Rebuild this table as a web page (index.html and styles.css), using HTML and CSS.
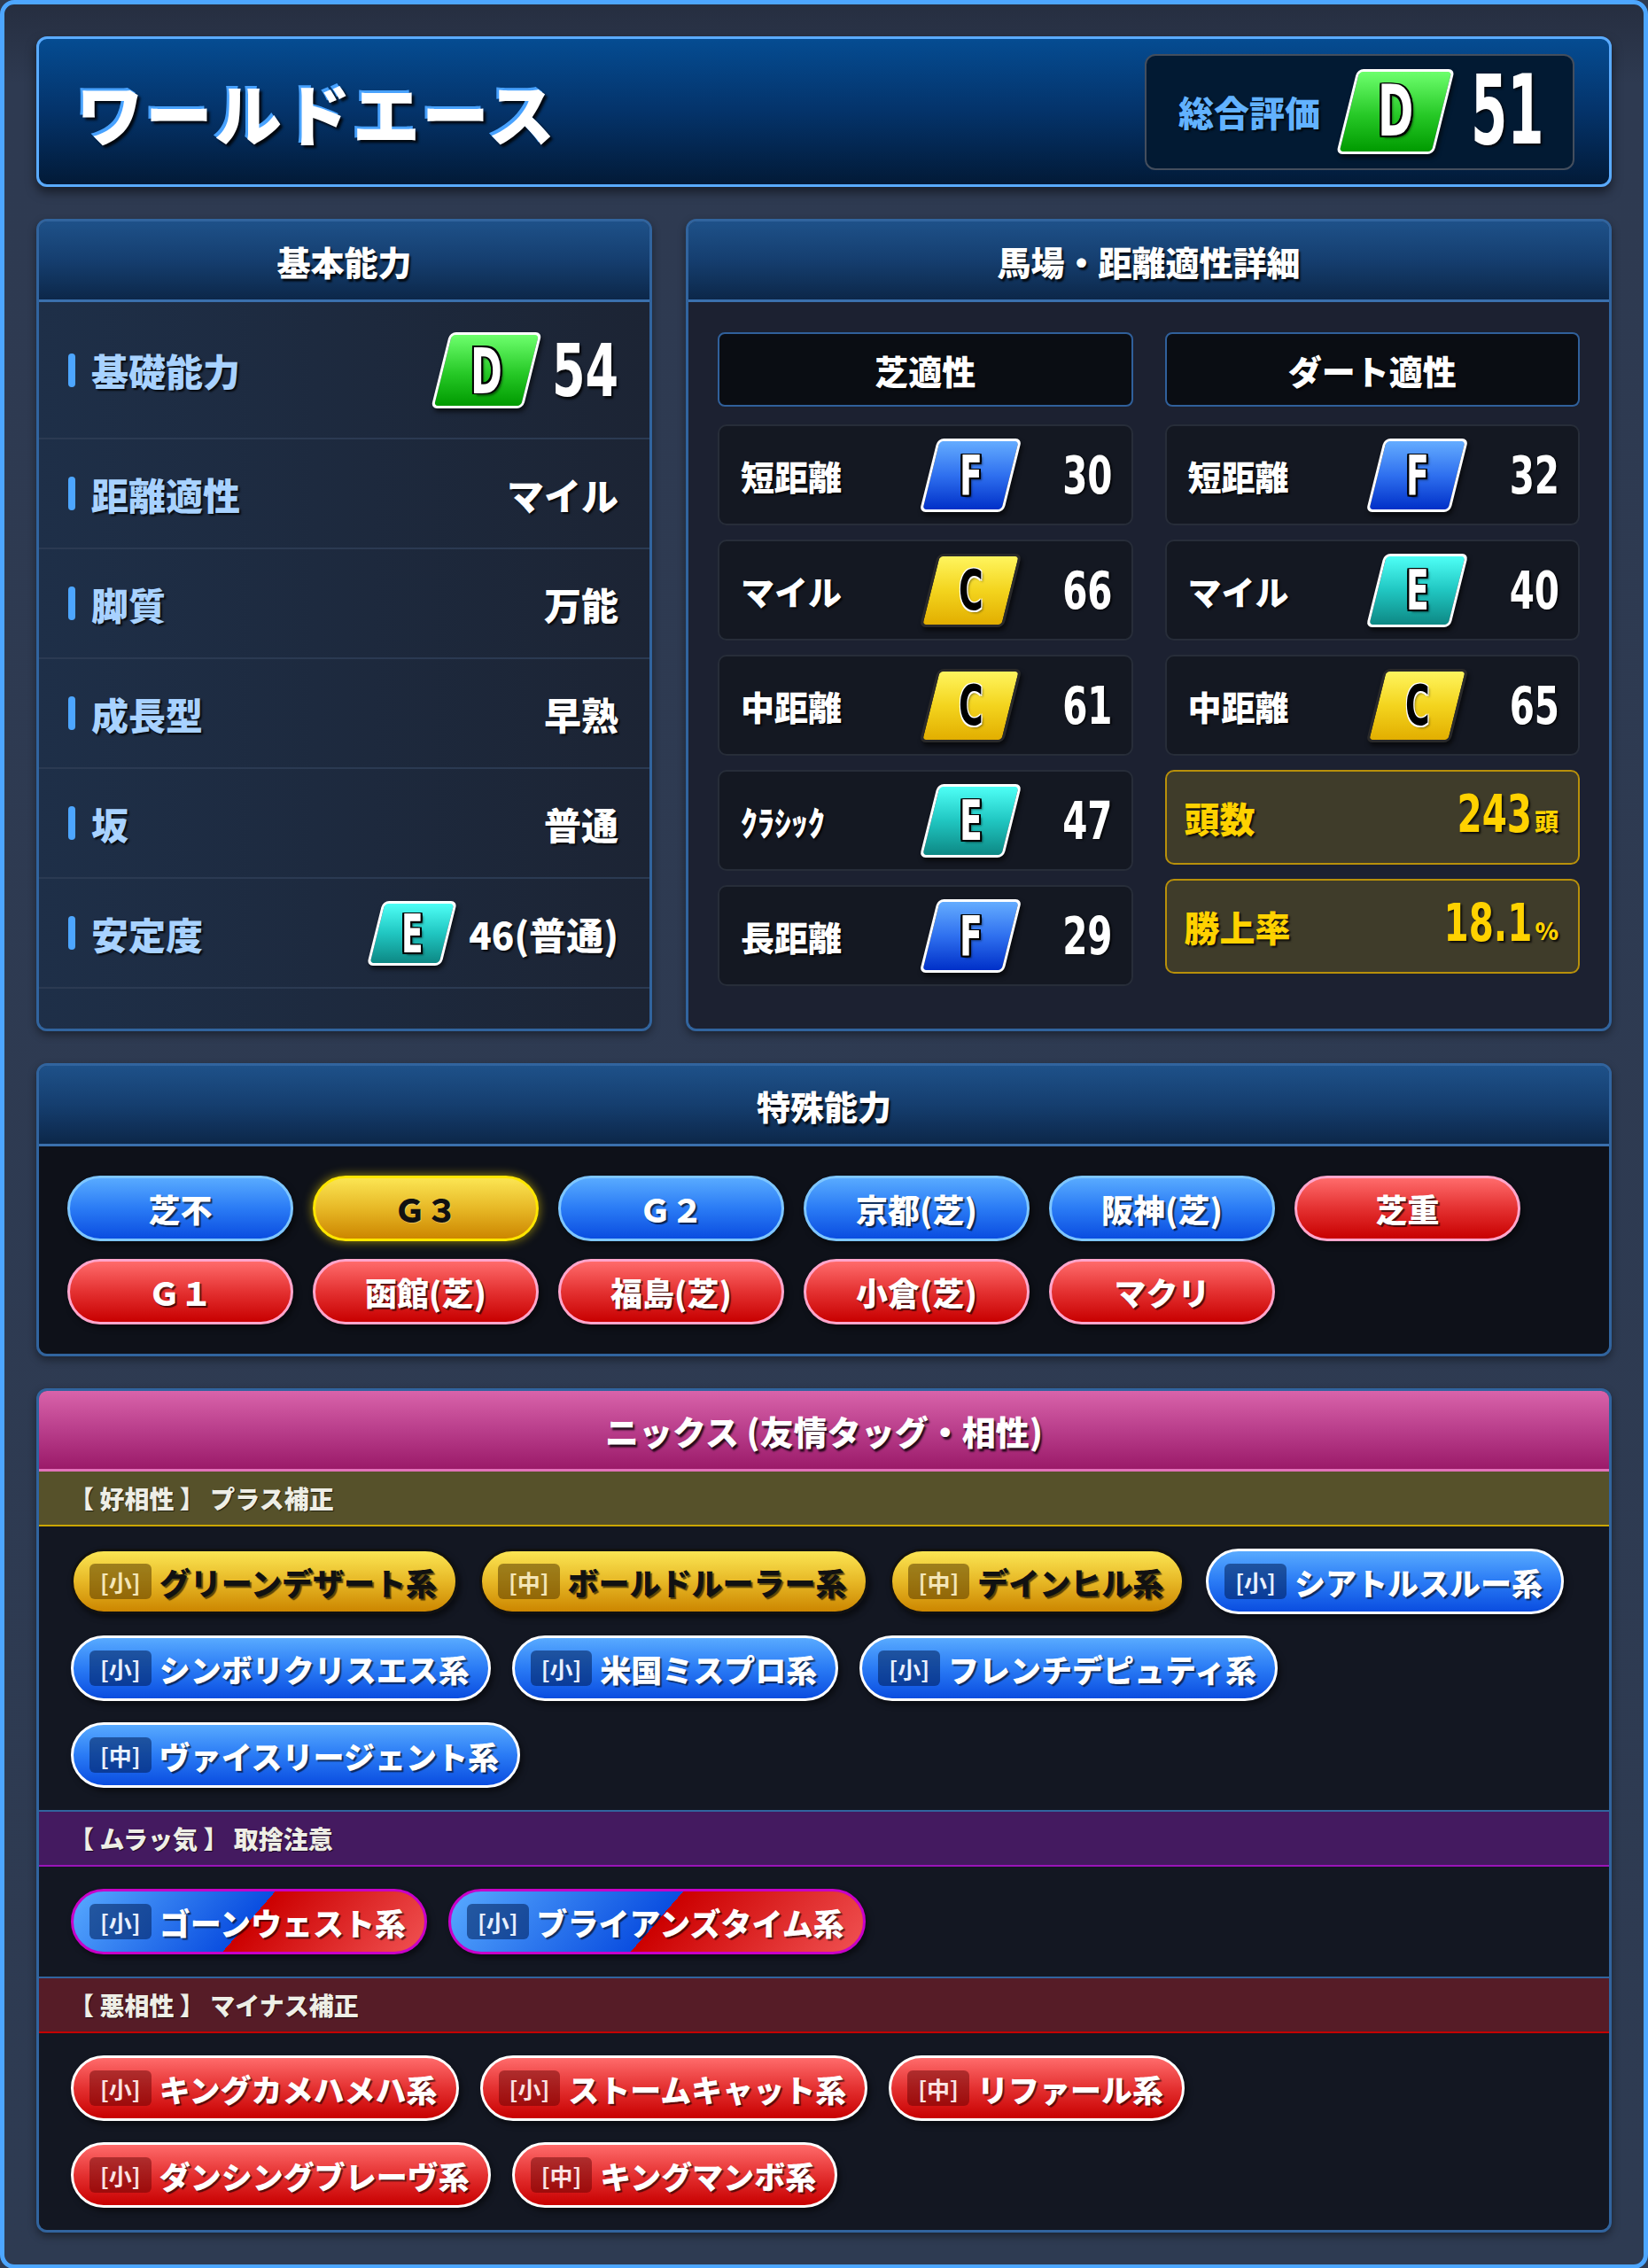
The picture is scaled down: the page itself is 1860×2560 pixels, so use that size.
FILE: index.html
```html
<!DOCTYPE html>
<html lang="ja">
<head>
<meta charset="utf-8">
<title>ワールドエース</title>
<link rel="stylesheet" href="styles.css">
</head>
<body>
<div class="frame">
  <header class="top">
    <h1 class="name">ワールドエース</h1>
    <div class="score">
      <span class="score-label">総合評価</span>
      <span class="grade g-d sz-xl"><span>D</span></span>
      <span class="score-num">51</span>
    </div>
  </header>

  <div class="row2">
    <section class="panel">
      <div class="panel-head">基本能力</div>
      <div class="basic-body">
        <div class="brow first">
          <span class="blabel">基礎能力</span>
          <span class="bval"><span class="grade g-d sz-l"><span>D</span></span><span class="bignum">54</span></span>
        </div>
        <div class="brow"><span class="blabel">距離適性</span><span class="bval">マイル</span></div>
        <div class="brow"><span class="blabel">脚質</span><span class="bval">万能</span></div>
        <div class="brow"><span class="blabel">成長型</span><span class="bval">早熟</span></div>
        <div class="brow"><span class="blabel">坂</span><span class="bval">普通</span></div>
        <div class="brow">
          <span class="blabel">安定度</span>
          <span class="bval"><span class="grade g-e sz-s"><span>E</span></span><span>46(普通)</span></span>
        </div>
      </div>
    </section>

    <section class="panel">
      <div class="panel-head">馬場・距離適性詳細</div>
      <div class="fit-body">
        <div class="col">
          <div class="subhead">芝適性</div>
          <div class="frow"><span class="flabel">短距離</span><span class="grade g-f sz-m"><span>F</span></span><span class="fnum">30</span></div>
          <div class="frow"><span class="flabel">マイル</span><span class="grade g-c sz-m"><span>C</span></span><span class="fnum">66</span></div>
          <div class="frow"><span class="flabel">中距離</span><span class="grade g-c sz-m"><span>C</span></span><span class="fnum">61</span></div>
          <div class="frow"><span class="flabel">ｸﾗｼｯｸ</span><span class="grade g-e sz-m"><span>E</span></span><span class="fnum">47</span></div>
          <div class="frow"><span class="flabel">長距離</span><span class="grade g-f sz-m"><span>F</span></span><span class="fnum">29</span></div>
        </div>
        <div class="col">
          <div class="subhead">ダート適性</div>
          <div class="frow"><span class="flabel">短距離</span><span class="grade g-f sz-m"><span>F</span></span><span class="fnum">32</span></div>
          <div class="frow"><span class="flabel">マイル</span><span class="grade g-e sz-m"><span>E</span></span><span class="fnum">40</span></div>
          <div class="frow"><span class="flabel">中距離</span><span class="grade g-c sz-m"><span>C</span></span><span class="fnum">65</span></div>
          <div class="stat"><span class="stat-label">頭数</span><span class="stat-val"><span class="stat-num">243</span><span class="stat-unit">頭</span></span></div>
          <div class="stat"><span class="stat-label">勝上率</span><span class="stat-val"><span class="stat-num">18.1</span><span class="stat-unit">%</span></span></div>
        </div>
      </div>
    </section>
  </div>

  <section class="panel">
    <div class="panel-head">特殊能力</div>
    <div class="sp-body">
      <span class="pill blue">芝不</span>
      <span class="pill gold">Ｇ３</span>
      <span class="pill blue">Ｇ２</span>
      <span class="pill blue">京都(芝)</span>
      <span class="pill blue">阪神(芝)</span>
      <span class="pill red">芝重</span>
      <span class="pill red">Ｇ１</span>
      <span class="pill red">函館(芝)</span>
      <span class="pill red">福島(芝)</span>
      <span class="pill red">小倉(芝)</span>
      <span class="pill red">マクリ</span>
    </div>
  </section>

  <section class="panel nicks">
    <div class="panel-head">ニックス (友情タッグ・相性)</div>
    <div class="sec-head good">【 好相性 】 プラス補正</div>
    <div class="sec-body">
      <span class="nick gold"><span class="tag">[小]</span>グリーンデザート系</span>
      <span class="nick gold"><span class="tag">[中]</span>ボールドルーラー系</span>
      <span class="nick gold"><span class="tag">[中]</span>デインヒル系</span>
      <span class="nick blue"><span class="tag">[小]</span>シアトルスルー系</span>
      <span class="nick blue"><span class="tag">[小]</span>シンボリクリスエス系</span>
      <span class="nick blue"><span class="tag">[小]</span>米国ミスプロ系</span>
      <span class="nick blue"><span class="tag">[小]</span>フレンチデピュティ系</span>
      <span class="nick blue"><span class="tag">[中]</span>ヴァイスリージェント系</span>
    </div>
    <div class="sec-head mura">【 ムラッ気 】 取捨注意</div>
    <div class="sec-body">
      <span class="nick mix"><span class="tag">[小]</span>ゴーンウェスト系</span>
      <span class="nick mix"><span class="tag">[小]</span>ブライアンズタイム系</span>
    </div>
    <div class="sec-head bad">【 悪相性 】 マイナス補正</div>
    <div class="sec-body">
      <span class="nick red"><span class="tag">[小]</span>キングカメハメハ系</span>
      <span class="nick red"><span class="tag">[小]</span>ストームキャット系</span>
      <span class="nick red"><span class="tag">[中]</span>リファール系</span>
      <span class="nick red"><span class="tag">[小]</span>ダンシングブレーヴ系</span>
      <span class="nick red"><span class="tag">[中]</span>キングマンボ系</span>
    </div>
  </section>
</div>
</body>
</html>
```

FILE: styles.css
```css
* { box-sizing: border-box; margin: 0; padding: 0; }
html, body { background: #2e3b52; }
body {
  margin: 0;
  font-family: "Noto Sans CJK JP", "Noto Sans", sans-serif;
  font-weight: 900;
  color: #fff;
}

.frame {
  width: 1860px;
  min-height: 2560px;
  border: 5px solid #4da6ff;
  border-radius: 16px;
  background: linear-gradient(#262e40, #2e3a51 90px, #2e3b52);
  padding: 36px;
  display: flex;
  flex-direction: column;
  gap: 36px;
}

/* ---------- header ---------- */
.top {
  height: 170px;
  flex: none;
  border: 3px solid #5aabff;
  border-radius: 12px;
  background: linear-gradient(#054c92, #04336a 50%, #021a37);
  display: flex;
  align-items: center;
  justify-content: space-between;
  padding: 0 39px 0 42px;
  box-shadow: 0 6px 12px rgba(0, 0, 0, .5);
}
.name {
  font-size: 76px;
  font-weight: 900;
  letter-spacing: 2px;
  line-height: 1;
  color: #fff;
  text-shadow: -3px -3px 0 #48a2ff, 3px 3px 3px rgba(0, 0, 0, .85);
}
.score {
  width: 485px;
  height: 131px;
  border: 2px solid #444e5d;
  border-radius: 12px;
  background: #021a33;
  display: flex;
  align-items: center;
  padding: 0 20px 0 36px;
  gap: 30px;
}
.score-label {
  font-size: 40px;
  white-space: nowrap;
  flex: none;
  color: #62b2ff;
  text-shadow: 2px 2px 2px rgba(0, 0, 0, .8);
}
.score-num, .bignum, .fnum, .stat-num {
  font-family: "DejaVu Sans Condensed", "Liberation Sans Narrow", "Liberation Sans", sans-serif;
  font-weight: 700;
  line-height: 1;
  display: inline-block;
  white-space: nowrap;
}
.score-num {
  font-size: 66px;
  transform: scaleY(1.65);
  text-shadow: 2px 1px 2px rgba(0, 0, 0, .8);
}

/* ---------- grade badges ---------- */
.grade {
  display: inline-flex;
  align-items: center;
  justify-content: center;
  flex: none;
  transform: skewX(-14deg);
  border: 3px solid #fff;
  border-radius: 7px;
  box-shadow: 3px 4px 5px rgba(0, 0, 0, .6);
}
.grade > span {
  display: block;
  transform: skewX(14deg) scaleY(1.5);
  font-family: "DejaVu Sans Condensed", "Liberation Sans Narrow", "Liberation Sans", sans-serif;
  font-weight: 700;
  line-height: 1;
  color: #fff;
  text-shadow: -2px -1px 0 #000, 2px -1px 0 #000, -2px 1px 0 #000, 2px 1px 0 #000,
               0 -1px 0 #000, 0 1px 0 #000, -2px 0 0 #000, 2px 0 0 #000, 3px 2px 2px rgba(0,0,0,.5);
}
.g-d { background: linear-gradient(#6dff6d, #26c826 55%, #009a00); }
.g-f { background: linear-gradient(#64acff, #2f70ef 50%, #0030c8); }
.g-e { background: linear-gradient(#4efff6, #20c6c1 50%, #0d8884); }
.g-c { background: linear-gradient(#fff55e, #f3d41e 50%, #e2ae00); border-color: #2a2a2a; }
.g-c > span {
  color: #000;
  text-shadow: -1px -1px 0 #fff, 1px -1px 0 #fff, -1px 1px 0 #fff, 1px 1px 0 #fff, 2px 2px 2px rgba(0,0,0,.4);
}
.sz-xl { width: 110px; height: 96px; }
.sz-xl > span { font-size: 54px; }
.sz-l { width: 104px; height: 86px; }
.sz-l > span { font-size: 48px; }
.sz-m { width: 95px; height: 83px; }
.sz-m > span { font-size: 42px; }
.sz-s { width: 84px; height: 73px; }
.sz-s > span { font-size: 40px; }

/* ---------- panels ---------- */
.row2 {
  display: grid;
  grid-template-columns: 695px 1fr;
  gap: 38px;
  flex: none;
}
.panel {
  border: 3px solid #31649e;
  border-radius: 12px;
  overflow: hidden;
  display: flex;
  flex-direction: column;
  box-shadow: 0 4px 10px rgba(0, 0, 0, .4);
  flex: none;
}
.panel-head {
  height: 91px;
  flex: none;
  border-bottom: 3px solid #3a70ad;
  background: linear-gradient(#1e5189, #153e6f 50%, #0c2749);
  display: flex;
  align-items: center;
  justify-content: center;
  font-size: 38px;
  text-shadow: 2px 3px 2px rgba(0, 0, 0, .8);
}

/* basic */
.basic-body {
  flex: 1;
  background: linear-gradient(90deg, #1e2f48, #1c2434);
}
.brow {
  height: 124px;
  border-bottom: 2px solid #2b3a52;
  display: flex;
  align-items: center;
  justify-content: space-between;
  padding: 0 35px 0 33px;
}
.brow.first { height: 155px; }
.blabel {
  display: flex;
  align-items: center;
  gap: 18px;
  font-size: 42px;
  color: #a8d2ff;
  text-shadow: 2px 2px 2px rgba(0, 0, 0, .8);
}
.blabel::before {
  content: "";
  flex: none;
  width: 8px;
  height: 38px;
  border-radius: 4px;
  background: #4da6ff;
}
.bval {
  display: flex;
  align-items: center;
  gap: 22px;
  font-size: 42px;
  text-shadow: 2px 2px 2px rgba(0, 0, 0, .8);
}
.bignum {
  font-size: 60px;
  transform: scaleY(1.37);
}

/* fit */
.fit-body {
  flex: 1;
  background: #1c2131;
  padding: 34px 33px 48px;
  display: grid;
  grid-template-columns: 1fr 1fr;
  gap: 36px;
}
.col {
  display: flex;
  flex-direction: column;
  gap: 16px;
}
.subhead {
  height: 84px;
  margin-bottom: 4px;
  border: 2px solid #30609b;
  border-radius: 8px;
  background: #0a0d13;
  display: flex;
  align-items: center;
  justify-content: center;
  font-size: 38px;
  text-shadow: 2px 2px 2px rgba(0, 0, 0, .8);
}
.frow {
  height: 114px;
  border: 2px solid #272d39;
  border-radius: 10px;
  background: #141822;
  display: flex;
  align-items: center;
  padding: 0 21px 0 24px;
}
.flabel {
  flex: 1;
  font-size: 38px;
  text-shadow: 2px 2px 2px rgba(0, 0, 0, .8);
}
.frow .grade { margin-right: 28px; }
.fnum {
  width: 85px;
  text-align: right;
  font-size: 45px;
  transform: scaleY(1.3);
  text-shadow: 2px 1px 2px rgba(0, 0, 0, .8);
}
.stat {
  height: 107px;
  border: 2px solid #b8900a;
  border-radius: 10px;
  background: #3f3c2a;
  display: flex;
  align-items: center;
  justify-content: space-between;
  padding: 0 22px 0 20px;
  color: #ffd200;
  text-shadow: 2px 2px 2px rgba(0, 0, 0, .8);
}
.stat-label { font-size: 40px; }
.stat-val { display: flex; align-items: baseline; gap: 3px; }
.stat-num { font-size: 45px; transform: scaleY(1.3); transform-origin: 50% 80%; }
.stat-unit { font-size: 27px; }

/* special */
.sp-body {
  background: #0e1119;
  padding: 33px 32px;
  display: flex;
  flex-wrap: wrap;
  gap: 20px 22px;
}
.pill {
  width: 255px;
  height: 74px;
  border-radius: 37px;
  border: 3px solid;
  display: flex;
  align-items: center;
  justify-content: center;
  font-size: 36px;
  text-shadow: 2px 2px 1px rgba(0, 0, 0, .65);
  box-shadow: 3px 4px 6px rgba(0, 0, 0, .5);
}
.blue { background: linear-gradient(#58aaff, #2a7bf5 50%, #0a4de0); border-color: #7ec6ff; }
.red { background: linear-gradient(#ff6b6b, #e43131 50%, #c80000); border-color: #ffa6cc; }
.gold {
  background: linear-gradient(#fbe553, #e7b826 50%, #cc8600);
  border-color: #ffe600;
  color: #111;
  text-shadow: 1px 1px 0 rgba(255, 255, 255, .3);
  box-shadow: 0 0 12px rgba(255, 225, 0, .6);
}

/* nicks */
.nicks .panel-head {
  background: linear-gradient(#d963aa, #b93e8b 50%, #9b1a69);
  border-bottom: 3px solid #e272b9;
}
.sec-head {
  height: 62px;
  display: flex;
  align-items: center;
  padding: 0 34px;
  font-size: 28px;
  color: #eeeee6;
  text-shadow: 1px 1px 1px rgba(0, 0, 0, .6);
}
.sec-head.good { background: #56512a; border-bottom: 2px solid #c9a500; }
.sec-head.mura { height: 64px; background: #441a60; border-top: 2px solid #31649e; border-bottom: 2px solid #9a14b8; }
.sec-head.bad { height: 64px; background: #561c27; border-top: 2px solid #31649e; border-bottom: 2px solid #c40000; }
.sec-body {
  background: #131722;
  padding: 25px 28px 25px 36px;
  display: flex;
  flex-wrap: wrap;
  gap: 24px;
}
.nick {
  height: 74px;
  border-radius: 37px;
  border: 3px solid;
  display: flex;
  align-items: center;
  padding: 0 21px 0 18px;
  gap: 9px;
  font-size: 35px;
  text-shadow: 2px 2px 1px rgba(0, 0, 0, .6);
  box-shadow: 3px 4px 6px rgba(0, 0, 0, .5);
}
.tag {
  height: 40px;
  padding: 0 12px;
  border-radius: 6px;
  background: rgba(0, 30, 85, .55);
  color: #e8f0ff;
  font-size: 26px;
  font-weight: 700;
  display: flex;
  align-items: center;
  text-shadow: none;
}
.nick.gold .tag { background: rgba(90, 60, 0, .55); color: #f4e6b8; }
.nick.red .tag { background: rgba(90, 0, 0, .45); color: #fbe2e2; }
.nick.mix {
  background: linear-gradient(131deg, #58aaff 0%, #0a4ee0 50%, #cc0000 50%, #f05252 100%);
  border-color: #c800c8;
}
```
